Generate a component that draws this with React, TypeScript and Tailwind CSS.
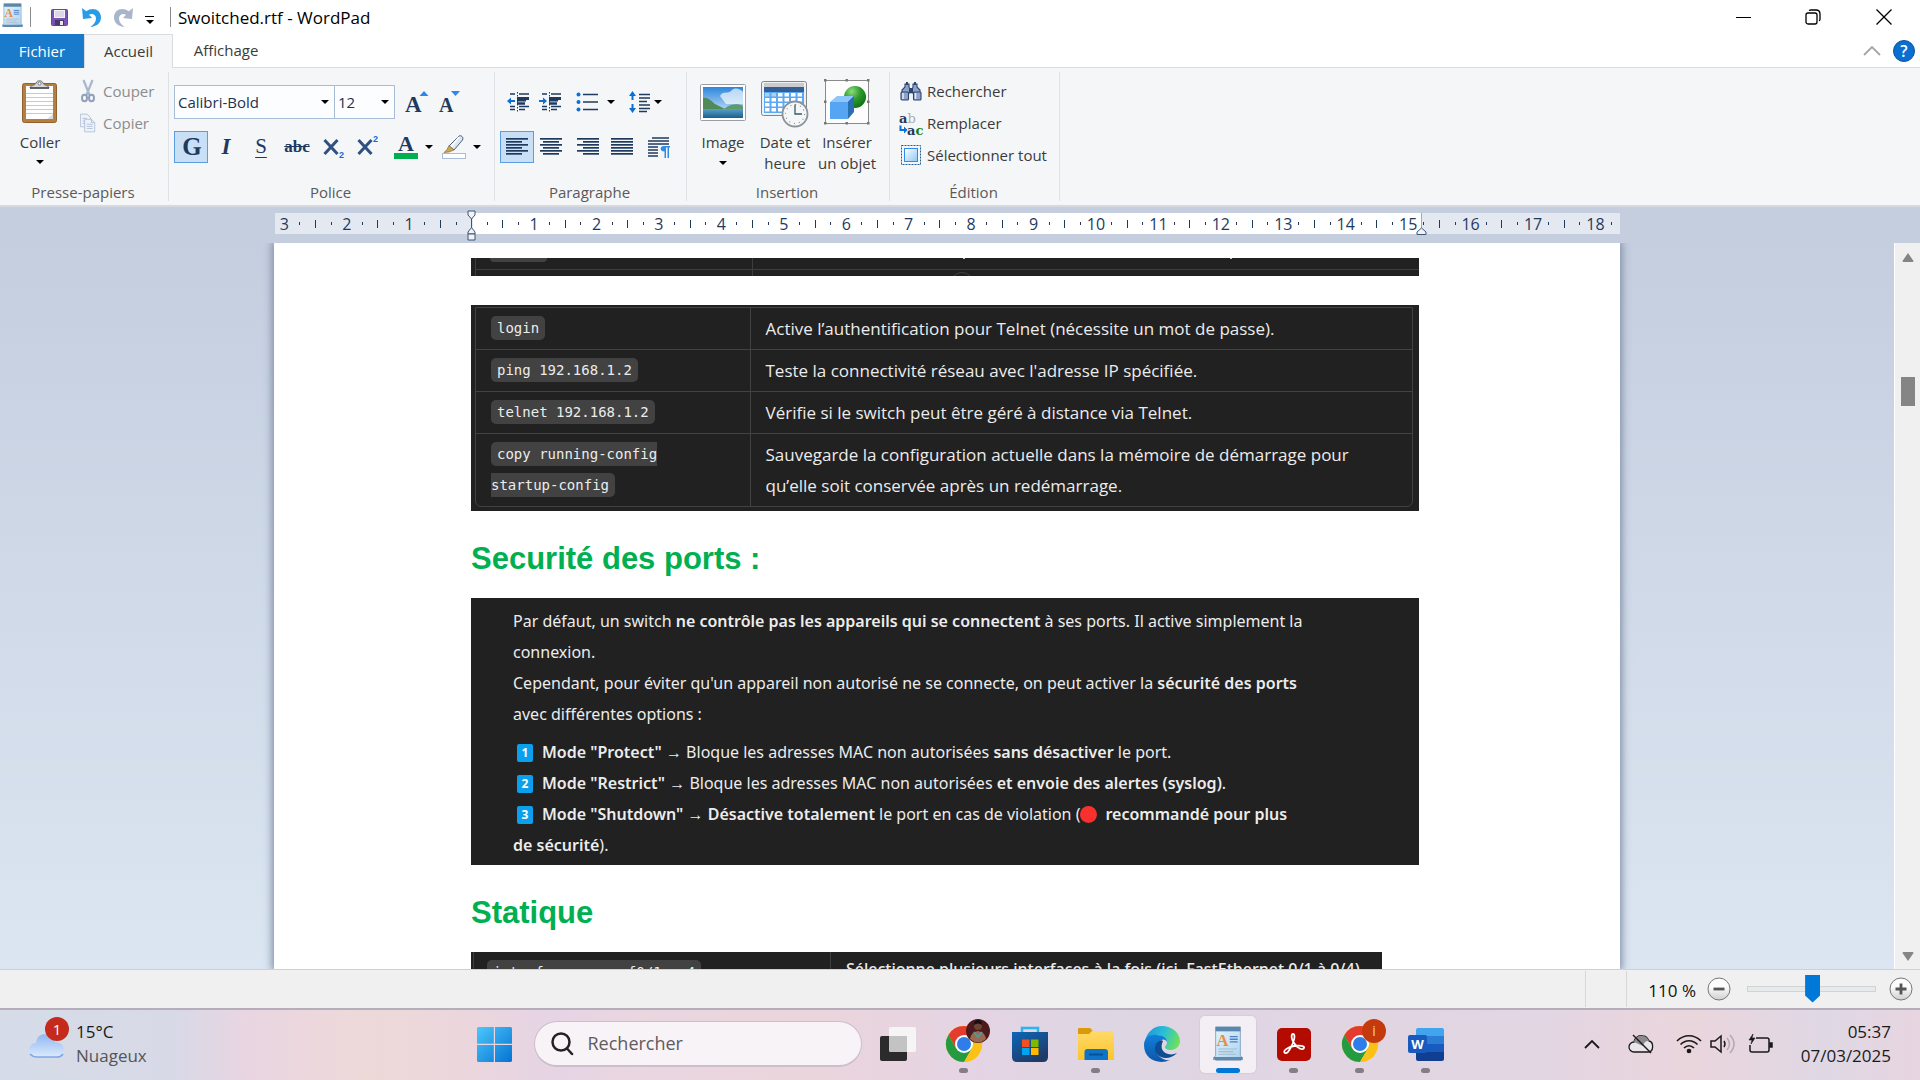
import type { ReactNode } from 'react';

const INK = '#1f3a5f';
const BLUE = '#0a6fd6';

function Caret() {
  return (
    <svg width="8" height="4" viewBox="0 0 8 4" className="shrink-0" aria-hidden="true">
      <path d="M0 0h8L4 4z" fill="#000" />
    </svg>
  );
}

function WordPadIcon({ size }: { size: number }) {
  return (
    <svg width={size} height={size * 1.18} viewBox="0 0 34 40" aria-hidden="true">
      <defs>
        <linearGradient id={'wp' + size} x1="0" y1="0" x2="1" y2="1">
          <stop offset="0" stopColor="#e8f5fd" />
          <stop offset="1" stopColor="#a9d3ef" />
        </linearGradient>
      </defs>
      <path d="M3 1h28v32l3 5H0l3-5z" fill={'url(#wp' + size + ')'} stroke="#7d9fbf" />
      <rect x="3" y="1" width="28" height="5" fill="#5b87ad" />
      <path d="M0 35h34l-2 4H3z" fill="#5f88ad" />
      <text x="4" y="23" fontFamily="Liberation Serif, serif" fontWeight="700" fontSize="19" fill="#f08a3a">A</text>
      <path d="M19 12h9M19 15h9M19 18h9" stroke="#4f7fc4" strokeWidth="1.5" />
      <path d="M6 26h21M6 29h17M6 32h20" stroke="#a8b9c9" strokeWidth="1.2" />
    </svg>
  );
}

function SaveIcon() {
  return (
    <svg width="17" height="17" viewBox="0 0 17 17" aria-hidden="true">
      <rect x=".5" y=".5" width="16" height="16" rx="1" fill="#7a52b3" stroke="#6a44a0" />
      <rect x="3" y="1" width="11" height="8" fill="#f4f2f8" />
      <path d="M4 3h9M4 5h9M4 7h9" stroke="#b9b0cc" strokeWidth=".8" />
      <rect x="4" y="11" width="9" height="5.5" fill="#4b3a66" />
      <rect x="9" y="12" width="3" height="4" fill="#e9e6f0" />
    </svg>
  );
}

function UndoIcon({ flip }: { flip?: boolean }) {
  return (
    <svg width="20" height="21" viewBox="0 0 20 21" className={flip ? '-scale-x-100' : ''} aria-hidden="true">
      <path
        d="M0 1l1 11 9-1-3-3.200c3-1.800 7-.3 7 3.700 0 3-2 6-5.500 8.500C14.500 19.500 19 16 19 10.500 19 3 11-.5 4.300 4.300z"
        fill={flip ? '#a9b5cb' : '#2b9be6'}
      />
    </svg>
  );
}

function ClipboardIcon() {
  return (
    <svg width="36" height="44" viewBox="0 0 36 44" aria-hidden="true">
      <rect x=".5" y="3.500" width="34" height="39" rx="2" fill="#b5803f" stroke="#8f6230" />
      <path d="M4 6h27v33H4z" fill="#fff" />
      <path d="M25 39l6-5v5z" fill="#d8dde2" />
      <path d="M4 13.500h27M4 17.500h27M4 21.500h27M4 25.500h27M4 29.500h27M4 33.500h27" stroke="#b9cddc" />
      <path d="M8 8c0-3 5-2 6-5 1-3 6-3 7 0 1 3 6 2 6 5z" fill="#d5d8db" stroke="#6b6f74" />
      <path d="M8 8h19" stroke="#44484c" strokeWidth="1.500" />
      <circle cx="17.500" cy="3.500" r="1.500" fill="#fff" stroke="#777" />
    </svg>
  );
}

function ScissorsIcon() {
  return (
    <svg width="14" height="24" viewBox="0 0 14 24" fill="none" aria-hidden="true">
      <path d="M2.500 1l6 15M11.500 1l-6 15" stroke="#a9b6cc" strokeWidth="2.200" />
      <ellipse cx="3.500" cy="19" rx="2.500" ry="3.300" stroke="#8fa0bd" strokeWidth="2" />
      <ellipse cx="10.500" cy="19" rx="2.500" ry="3.300" stroke="#8fa0bd" strokeWidth="2" />
    </svg>
  );
}

function CopyIcon() {
  return (
    <svg width="19" height="22" viewBox="0 0 19 22" fill="#eef2f9" stroke="#aebcd6" aria-hidden="true">
      <path d="M.5.5h8l4 4v11H.5z" />
      <path d="M3 5.500h5M3 8.500h5M3 11.500h5" />
      <path d="M5.500 6.500h8l4 4v11h-12z" />
      <path d="M13.500 6.500v4h4M8 12.500h7M8 15h7M8 17.500h7" fill="none" />
    </svg>
  );
}

function GrowIcon({ shrink }: { shrink?: boolean }) {
  return (
    <svg width="25" height="25" viewBox="0 0 25 25" overflow="visible" aria-hidden="true">
      <text x="0" y="22" fontFamily="Liberation Serif, serif" fontWeight="700" fontSize={shrink ? 20 : 23} fill={INK}>
        A
      </text>
      {shrink ? <path d="M12 1h9l-4.500 5z" fill="#2f86e8" /> : <path d="M14.500 6h9L19 1z" fill="#2f86e8" />}
    </svg>
  );
}

function FontColorIcon() {
  return (
    <svg width="24" height="26" viewBox="0 0 24 26" overflow="visible" aria-hidden="true">
      <text x="4" y="17" fontFamily="Liberation Serif, serif" fontWeight="700" fontSize="22" fill={INK}>A</text>
      <rect y="19" width="24" height="6" fill="#00b050" />
    </svg>
  );
}

function HighlightIcon() {
  return (
    <svg width="24" height="24" viewBox="0 0 24 24" aria-hidden="true">
      <path d="M7 11L17 1c2-1 5 1 3.500 4L12 15z" fill="#dfe6f0" stroke="#4a5f7f" />
      <path d="M17 2L9 12" stroke="#fff" strokeWidth="1.500" />
      <path d="M7 10.500l5 4.500-5 2-5 .5 3-3z" fill="#c9a55a" stroke="#7a6030" strokeWidth=".6" />
      <rect x=".5" y="18.500" width="23" height="5" fill="#fff" stroke="#a9bcd6" />
    </svg>
  );
}

function Lines({ rows }: { rows: [number, number][] }) {
  return (
    <svg width="22" height="19" viewBox="0 0 22 19" aria-hidden="true">
      {rows.map(([a, b], i) => (
        <rect key={i} x={a} y={i * 3} width={b - a} height="1.700" fill={INK} />
      ))}
    </svg>
  );
}

function IndentIcon({ more }: { more?: boolean }) {
  return (
    <svg width="23" height="20" viewBox="0 0 23 20" aria-hidden="true">
      <path d="M3 2h5M12 2h10M3 14.500h5M12 14.500h10M3 17.500h5M12 17.500h6" stroke={INK} strokeWidth="1.400" />
      <path d="M10 6.500h12M10 8h9" stroke={INK} strokeWidth="3" />
      <path d="M10 11.500h8" stroke={INK} strokeWidth="2.500" />
      <path d="M10.500 0v20" stroke={INK} strokeDasharray="1.500 1.500" />
      {more ? (
        <path d="M8 9L4 5.500V8H0v2h4v2.500z" fill={BLUE} />
      ) : (
        <path d="M0 9l4-3.500V8h4v2H4v2.500z" fill={BLUE} />
      )}
    </svg>
  );
}

function BulletsIcon() {
  return (
    <svg width="23" height="20" viewBox="0 0 23 20" aria-hidden="true">
      <g fill={BLUE}>
        <circle cx="2.500" cy="2.500" r="2" />
        <circle cx="2.500" cy="10" r="2" />
        <circle cx="2.500" cy="17.500" r="2" />
      </g>
      <path d="M7 2.500h15M7 10h15M7 17.500h15" stroke={INK} strokeWidth="1.300" />
    </svg>
  );
}

function SpacingIcon() {
  return (
    <svg width="21" height="22" viewBox="0 0 21 22" aria-hidden="true">
      <path d="M10 3.500h11M10 7h11M10 10.500h8M10 14h11M10 17.500h11M10 20.500h8" stroke={INK} strokeWidth="1.400" />
      <path d="M3.500 0L7 5H4.500v4h-2V5H0zM3.500 22L7 17H4.500v-4h-2v4H0z" fill={BLUE} />
    </svg>
  );
}

function ParagraphIcon() {
  return (
    <svg width="22" height="21" viewBox="0 0 22 21" aria-hidden="true">
      <path d="M4 1h17M0 4h21M0 7h21M0 10h10M0 13h10M0 16h10M0 19h10" stroke={INK} strokeWidth="1.400" />
      <path d="M16 9h6v1.500h-1V21h-1.500V10.500H18V21h-1.500v-6.500c-5 0-5-5.500-.5-5.500z" fill="#2f8be8" />
    </svg>
  );
}

function PictureIcon() {
  return (
    <svg width="46" height="37" viewBox="0 0 46 37" aria-hidden="true">
      <defs>
        <linearGradient id="sky" x1="0" y1="0" x2="0" y2="1">
          <stop offset="0" stopColor="#2c86dc" />
          <stop offset="1" stopColor="#e3f3fd" />
        </linearGradient>
        <linearGradient id="sea" x1="0" y1="0" x2="0" y2="1">
          <stop offset="0" stopColor="#5a9fc4" />
          <stop offset="1" stopColor="#1a5f90" />
        </linearGradient>
      </defs>
      <rect x=".5" y=".5" width="45" height="36" rx="1" fill="#fff" stroke="#9a9fa5" />
      <rect x="3" y="3" width="40" height="31" fill="url(#sky)" />
      <path d="M20 12c3-6 8-1 12-6 4-3 8-1 11 2v12H26z" fill="#fff" opacity=".65" />
      <path d="M3 14c5-1 8 3 12 6l10 5H3z" fill="#4f8a58" />
      <path d="M24 25c5-5 14-6 19-3v3z" fill="#5e9a6c" />
      <rect x="3" y="25" width="40" height="9" fill="url(#sea)" />
    </svg>
  );
}

function CalendarIcon() {
  const cols = [0, 1, 2, 3, 4, 5];
  const rows = [0, 1, 2, 3];
  return (
    <svg width="48" height="47" viewBox="0 0 48 47" aria-hidden="true">
      <rect x=".5" y=".5" width="45" height="34" rx="2" fill="#eef0f2" stroke="#80858b" />
      <rect x="3" y="2" width="40" height="4" fill="#c9cbce" />
      <rect x="3" y="6" width="40" height="5" fill="#345f96" />
      <rect x="3" y="11" width="40" height="21" fill="#5aa9f2" />
      {rows.map((r) =>
        cols.map((c) => <rect key={r + '-' + c} x={4 + c * 6.5} y={12 + r * 5} width="4.500" height="3.500" fill={r === 0 && c < 2 ? '#a9d2f8' : '#fff'} />),
      )}
      <circle cx="34" cy="33" r="12.500" fill="#f4f6f7" stroke="#8d9297" strokeWidth="1.800" />
      <circle cx="34" cy="33" r="9.500" fill="none" stroke="#8a8f94" strokeWidth="1.200" strokeDasharray="1 3.970" />
      <path d="M34 23.500V33h7" fill="none" stroke="#3a5a66" strokeWidth="1.300" />
    </svg>
  );
}

function ObjectIcon() {
  return (
    <svg width="46" height="46" viewBox="0 0 46 46" aria-hidden="true">
      <defs>
        <radialGradient id="ball" cx=".35" cy=".25" r=".8">
          <stop offset="0" stopColor="#8ddb7a" />
          <stop offset=".5" stopColor="#2d9a2d" />
          <stop offset="1" stopColor="#0e6e14" />
        </radialGradient>
      </defs>
      <rect x="1.500" y="1.500" width="43" height="43" fill="#fdfdfd" stroke="#8a8a8a" />
      <g fill="#777">
        {[0, 21.5, 43].map((x) => [0, 21.5, 43].map((y) => (x === 21.5 && y === 21.5 ? null : <rect key={x + '-' + y} x={x} y={y} width="2.500" height="2.500" />)))}
      </g>
      <circle cx="31" cy="18" r="11" fill="url(#ball)" />
      <path d="M6 23l7-6h17l-6 6z" fill="#8cc6fb" />
      <path d="M24 23l6-6v16l-6 7z" fill="#2b6fb3" />
      <path d="M6 23h18v17H6z" fill="#55a5f2" />
    </svg>
  );
}

function BinocularsIcon() {
  return (
    <svg width="22" height="20" viewBox="0 0 22 20" aria-hidden="true">
      <g fill="#8fa3c8" stroke="#2b4470" strokeWidth="1.100">
        <path d="M5 3h4v3l1 3v3H2V9l3-3zM13 3h4v3l3 3v3h-8V9l1-3z" />
        <rect x="1" y="11" width="7.500" height="8" rx="1" />
        <rect x="13.500" y="11" width="7.500" height="8" rx="1" />
      </g>
      <path d="M6 1h2v3H6zM14 1h2v3h-2zM9 7h4v5H9z" fill="#2b4470" />
      <path d="M3 12v6M15.500 12v6" stroke="#e4eaf5" strokeWidth="1.500" />
    </svg>
  );
}

function ReplaceIcon() {
  return (
    <svg width="25" height="25" viewBox="0 0 25 25" overflow="visible" fontFamily="DejaVu Serif, serif" fontWeight="700" aria-hidden="true">
      <text x="0" y="12" fontSize="13" fill={INK}>a<tspan fontWeight="400" fill="#a9adb3">b</tspan></text>
      <text x="8" y="24" fontSize="13" fill={INK}>a<tspan fill="#14801c">c</tspan></text>
      <path d="M.5 14.500h2v3.500H5v-2.500l3.500 3.500L5 22.500V20H.5z" fill={BLUE} />
    </svg>
  );
}

function SelectAllIcon() {
  return (
    <svg width="20" height="20" viewBox="0 0 20 20" aria-hidden="true">
      <defs>
        <linearGradient id="sel" x1="0" y1="0" x2="1" y2="1">
          <stop offset="0" stopColor="#fff" />
          <stop offset="1" stopColor="#8fc6f5" />
        </linearGradient>
      </defs>
      <rect x=".5" y=".5" width="19" height="19" fill="none" stroke="#1d5f9e" strokeDasharray="2 1" />
      <rect x="3.500" y="3.500" width="13" height="13" fill="url(#sel)" stroke="#2f8be8" />
    </svg>
  );
}

function Group({ label, className, children }: { label: string; className: string; children: ReactNode }) {
  return (
    <section aria-label={label} className={'my-1 flex flex-col border-r border-[#dfe2e5] ' + className}>
      <div className="min-h-0 flex-1">{children}</div>
      <div className="pr-[2px] pb-px text-center leading-4 text-[#5a5a5a]">{label}</div>
    </section>
  );
}

function Tool({ label, className, active, children }: { label: string; className: string; active?: boolean; children: ReactNode }) {
  return (
    <button
      type="button"
      aria-label={label}
      className={'flex h-8 shrink-0 items-center justify-center ' + (active ? 'border border-[#5c9ce0] bg-[#c9dff6] ' : '') + className}
    >
      {children}
    </button>
  );
}

function SideButton({ icon, label, muted }: { icon: ReactNode; label: string; muted?: boolean }) {
  return (
    <button type="button" className={'flex h-8 items-center whitespace-nowrap ' + (muted ? 'text-[#8c8c8c]' : 'text-[#3b3b3b]')}>
      <span className={muted ? 'flex w-4 items-center justify-center' : 'flex w-[26px] items-center justify-center'}>{icon}</span>
      <span className={muted ? 'pl-[7px]' : 'pl-[3px]'}>{label}</span>
    </button>
  );
}

function Ribbon() {
  return (
    <div className="flex h-[139px] shrink-0 border-b-2 border-[#d6dae0] bg-[#f5f6f7] text-[15px] text-[#3b3b3b]">
      <Group label="Presse-papiers" className="w-[169px]">
        <div className="flex">
          <button type="button" className="flex w-20 flex-col items-center pt-2">
            <ClipboardIcon />
            <span className="pt-2 leading-5">Coller</span>
            <span className="pt-2"><Caret /></span>
          </button>
          <div className="flex flex-col pt-[3px]">
            <SideButton muted icon={<ScissorsIcon />} label="Couper" />
            <SideButton muted icon={<CopyIcon />} label="Copier" />
          </div>
        </div>
      </Group>

      <Group label="Police" className="w-[326px]">
        <div className="flex items-center pt-[13px] pl-[5px]">
          <label className="relative flex items-center">
            <select aria-label="Police" className="h-[34px] w-[161px] appearance-none border border-[#a9bcd6] bg-[#fcfdfe] pl-[3px] text-[15px] text-[#1e3350]">
              <option>Calibri-Bold</option>
            </select>
            <span className="pointer-events-none absolute right-[6px]"><Caret /></span>
          </label>
          <label className="relative -ml-px flex items-center">
            <select aria-label="Taille de police" className="h-[34px] w-[61px] appearance-none border border-[#a9bcd6] bg-[#fcfdfe] pl-[3px] text-[15px] text-[#1e3350]">
              <option>12</option>
            </select>
            <span className="pointer-events-none absolute right-[6px]"><Caret /></span>
          </label>
          <Tool label="Agrandir la police" className="ml-[6px] w-8"><GrowIcon /></Tool>
          <Tool label="Réduire la police" className="ml-[2px] w-8"><GrowIcon shrink /></Tool>
        </div>
        <div className="flex items-center pt-3 pl-[5px] font-['Liberation_Serif',serif] text-[#1f3a5f]">
          <Tool active label="Gras" className="w-[34px] pl-[2px] text-[25px] font-bold">G</Tool>
          <Tool label="Italique" className="w-9 text-[23px] font-bold italic">I</Tool>
          <Tool label="Souligné" className="w-[34px] text-[21px] underline decoration-1 underline-offset-4">S</Tool>
          <Tool label="Barré" className="w-[38px] text-[17px] font-bold line-through">abc</Tool>
          <Tool label="Indice" className="w-9">
            <svg width="22" height="24" viewBox="0 0 22 24" overflow="visible">
              <path d="M1.500 5l13 14M14.500 5l-13 14" stroke="#2f5080" strokeWidth="3" />
              <text x="16" y="23" fontFamily="Liberation Sans, sans-serif" fontWeight="700" fontSize="9" fill={BLUE}>2</text>
            </svg>
          </Tool>
          <Tool label="Exposant" className="w-8">
            <svg width="22" height="24" viewBox="0 0 22 24" overflow="visible">
              <path d="M1.500 5l13 14M14.500 5l-13 14" stroke="#2f5080" strokeWidth="3" />
              <text x="16" y="7" fontFamily="Liberation Sans, sans-serif" fontWeight="700" fontSize="9" fill={BLUE}>2</text>
            </svg>
          </Tool>
          <Tool label="Couleur du texte" className="ml-2 w-[42px] gap-[7px]"><FontColorIcon /><Caret /></Tool>
          <Tool label="Surbrillance" className="ml-[6px] w-[42px] gap-[7px]"><HighlightIcon /><Caret /></Tool>
        </div>
      </Group>

      <Group label="Paragraphe" className="w-[192px]">
        <div className="flex items-center pt-[14px] pl-[6px]">
          <Tool label="Diminuer le retrait" className="w-[34px]"><IndentIcon /></Tool>
          <Tool label="Augmenter le retrait" className="w-[30px]"><IndentIcon more /></Tool>
          <Tool label="Puces" className="ml-[7px] w-[46px] gap-2"><BulletsIcon /><Caret /></Tool>
          <Tool label="Interligne" className="ml-2 w-[38px] gap-1"><SpacingIcon /><Caret /></Tool>
        </div>
        <div className="flex items-center pt-[13px] pl-[5px]">
          <Tool active label="Aligner à gauche" className="w-[34px]"><Lines rows={[[0, 22], [0, 16], [0, 22], [0, 16], [0, 22], [0, 16]]} /></Tool>
          <Tool label="Centrer" className="w-[34px]"><Lines rows={[[0, 22], [3, 19], [0, 22], [3, 19], [0, 22], [3, 19]]} /></Tool>
          <Tool label="Aligner à droite" className="ml-[3px] w-[34px]"><Lines rows={[[0, 22], [6, 22], [0, 22], [6, 22], [0, 22], [6, 22]]} /></Tool>
          <Tool label="Justifier" className="w-[33px]"><Lines rows={[[0, 22], [0, 22], [0, 22], [0, 22], [0, 22], [0, 22]]} /></Tool>
          <Tool label="Paragraphe" className="ml-1 w-[34px]"><ParagraphIcon /></Tool>
        </div>
      </Group>

      <Group label="Insertion" className="w-[203px]">
        <div className="flex pl-1 leading-[21px]">
          <button type="button" className="flex w-16 flex-col items-center pt-[12px]">
            <PictureIcon />
            <span className="pt-[11px]">Image</span>
            <span className="pt-2"><Caret /></span>
          </button>
          <button type="button" className="flex w-[60px] flex-col items-center pt-[9px] whitespace-nowrap">
            <CalendarIcon />
            <span className="pt-1">Date et<br />heure</span>
          </button>
          <button type="button" className="flex w-[64px] flex-col items-center pt-[7px] whitespace-nowrap">
            <ObjectIcon />
            <span className="pt-[7px]">Insérer<br />un objet</span>
          </button>
        </div>
      </Group>

      <Group label="Édition" className="w-[170px]">
        <div className="flex flex-col items-start pt-[3px] pl-2">
          <SideButton icon={<BinocularsIcon />} label="Rechercher" />
          <SideButton icon={<ReplaceIcon />} label="Remplacer" />
          <SideButton icon={<SelectAllIcon />} label="Sélectionner tout" />
        </div>
      </Group>
    </div>
  );
}

const QUARTERS = Array.from({ length: 86 }, (_, i) => i - 12);

function Ruler() {
  return (
    <div className="h-9 shrink-0 bg-[#c5cedf] pt-[6px] pr-[26px]">
      <div className="relative mx-auto flex h-[21px] w-[1345px] items-center bg-[linear-gradient(to_right,#e4e8f0_14.700%,#fff_14.700%,#fff_85.200%,#e4e8f0_85.200%)] pr-px pl-[2px] text-[16px] text-[#1f3a5f]">
        {QUARTERS.map((q) => (
          <span key={q} className="flex min-w-0 flex-1 items-center justify-center">
            {q === 0 ? null : q % 4 === 0 ? (
              <span>{Math.abs(q / 4)}</span>
            ) : (
              <span className={q % 2 === 0 ? 'h-2 w-px shrink-0 bg-[#1f3a5f]' : 'h-[3px] w-px shrink-0 bg-[#1f3a5f]'} />
            )}
          </span>
        ))}
        <svg width="13" height="31" viewBox="0 0 13 31" className="absolute top-[-3px] left-[190px]" fill="#f1f3f6" stroke="#3a5575" aria-hidden="true">
          <path d="M6.500 8v10" />
          <path d="M3 1h7v4L6.500 9 3 5z" />
          <path d="M6.500 17.500L10 22v2H3v-2z" />
          <path d="M3 24h7v6H3z" />
        </svg>
        <svg width="11" height="22" viewBox="0 0 11 22" className="absolute top-0 left-[1141px]" fill="#f1f3f6" stroke="#3a5575" aria-hidden="true">
          <path d="M5.500 0v15" stroke="#a0abba" />
          <path d="M5.500 15L10 19v2.500H1V19z" />
        </svg>
      </div>
    </div>
  );
}

const CODE = "box-decoration-slice rounded-[5px] bg-[#424242] px-[6px] py-[4px] font-['DejaVu_Sans_Mono',monospace] text-[14px]";

const COMMANDS = [
  { cmd: ['login'], lines: ['Active l’authentification pour Telnet (nécessite un mot de passe).'] },
  { cmd: ['ping 192.168.1.2'], lines: ["Teste la connectivité réseau avec l'adresse IP spécifiée."] },
  { cmd: ['telnet 192.168.1.2'], lines: ['Vérifie si le switch peut être géré à distance via Telnet.'] },
  {
    cmd: ['copy running-config', 'startup-config'],
    lines: ['Sauvegarde la configuration actuelle dans la mémoire de démarrage pour', 'qu’elle soit conservée après un redémarrage.'],
  },
];

function Keycap({ n }: { n: number }) {
  return (
    <span className="mr-[9px] ml-1 inline-flex h-[18px] w-4 items-center justify-center rounded-[2px] bg-[#0aa0ee] align-[1px] text-[12px] leading-none font-bold text-white">
      {n}
    </span>
  );
}

function Page() {
  return (
    <main className="mx-auto h-full w-[1346px] overflow-hidden bg-white pt-[15px] pl-[197px] shadow-[0_0_8px_2px_#7f8da6]">
      <div className="relative flex h-[18px] w-[948px] overflow-hidden bg-[#212121]">
        <div className="ml-[4px] w-[278px] border-x border-[#3d3d3d]">
          <div className="ml-[14px] h-1 w-[57px] rounded-b-[5px] bg-[#424242]" />
          <div className="mt-[7px] border-t border-[#3d3d3d]" />
        </div>
        <div className="flex-1">
          <div className="flex h-[11px] gap-[265px] pl-[210px]">
            <span className="h-px w-[2px] bg-[#c8c8c8]" />
            <span className="h-px w-[2px] bg-[#c8c8c8]" />
          </div>
          <div className="border-t border-[#3d3d3d]" />
        </div>
        <span className="absolute top-[14px] left-[479px] size-6 rounded-full border border-[#444]" />
      </div>

      <div className="mt-[29px] h-[206px] w-[948px] bg-[#212121] pt-[2px] pl-[4px] font-['Open_Sans',sans-serif] text-[#ececec]">
        <div className="w-[938px] rounded-b-[6px] border border-[#424242]">
          <table className="w-full border-collapse text-left">
            <tbody>
              {COMMANDS.map((row, i) => (
                <tr key={row.cmd[0]} className={i ? 'border-t border-[#424242]' : ''}>
                  <th scope="row" className="w-[274px] border-r border-[#424242] py-[5px] pl-[15px] align-top font-['DejaVu_Sans_Mono',monospace] text-[14px] leading-[31px] font-normal">
                    <code className={CODE}>
                      {row.cmd.map((c, k) => (
                        <span key={c}>{k ? <br /> : null}{c}</span>
                      ))}
                    </code>
                  </th>
                  <td className="py-[5px] pl-[15px] align-top text-[17px] leading-[31px]">
                    {row.lines.map((l) => (
                      <div key={l} className="whitespace-nowrap">{l}</div>
                    ))}
                  </td>
                </tr>
              ))}
            </tbody>
          </table>
        </div>
      </div>

      <h1 className="mt-[30px] font-['Liberation_Sans',sans-serif] text-[31px] leading-[36px] font-bold text-[#00b050]">Securité des ports :</h1>

      <div className="mt-[21px] h-[267px] w-[948px] bg-[#212121] pt-[8px] pl-[42px] font-['Noto_Sans',sans-serif] text-[16px] leading-[31px] whitespace-nowrap text-[#ececec]">
        <p>
          Par défaut, un switch <b className="font-semibold">ne contrôle pas les appareils qui se connectent</b> à ses ports. Il active simplement la<br />
          connexion.<br />
          Cependant, pour éviter qu'un appareil non autorisé ne se connecte, on peut activer la <b className="font-semibold">sécurité des ports</b><br />
          avec différentes options :
        </p>
        <p className="mt-[7px]">
          <Keycap n={1} /><b className="font-semibold">Mode "Protect"</b> → Bloque les adresses MAC non autorisées <b className="font-semibold">sans désactiver</b> le port.<br />
          <Keycap n={2} /><b className="font-semibold">Mode "Restrict"</b> → Bloque les adresses MAC non autorisées <b className="font-semibold">et envoie des alertes (syslog)</b>.<br />
          <Keycap n={3} /><b className="font-semibold">Mode "Shutdown"</b> → <b className="font-semibold">Désactive totalement</b> le port en cas de violation (
          <span className="mr-2 inline-block size-[17px] rounded-full bg-[#f8312f] align-[-3px]" /><b className="font-semibold">recommandé pour plus</b><br />
          <b className="font-semibold">de sécurité</b>).
        </p>
      </div>

      <h1 className="mt-[30px] font-['Liberation_Sans',sans-serif] text-[31px] leading-[36px] font-bold text-[#00b050]">Statique</h1>

      <div className="mt-[21px] flex h-20 w-[911px] bg-[#212121] font-['Noto_Sans',sans-serif] text-[16px] leading-[31px] whitespace-nowrap text-[#ececec]">
        <div className="ml-[2px] w-[358px] border-x border-[#3d3d3d] pt-[4px] pl-[13px]">
          <code className={CODE}>interface range f0/1 - 4</code>
        </div>
        <div className="pt-[2px] pl-[15px] font-medium">Sélectionne plusieurs interfaces à la fois (ici, FastEthernet 0/1 à 0/4).</div>
      </div>
    </main>
  );
}

function ScrollBar() {
  return (
    <div className="flex w-[26px] shrink-0 flex-col items-center border-l border-white bg-[#f0f0f0] pt-[10px] pb-2">
      <svg width="12" height="9" viewBox="0 0 12 9"><path d="M6 0l5.500 8q0 1-1 1h-9q-1 0-1-1z" fill="#858585" /></svg>
      <div className="mt-[115px] h-[29px] w-[14px] bg-[#858585]" />
      <div className="flex-1" />
      <svg width="12" height="9" viewBox="0 0 12 9"><path d="M6 9L.5 1q0-1 1-1h9q1 0 1 1z" fill="#858585" /></svg>
    </div>
  );
}

function ZoomButton({ plus }: { plus?: boolean }) {
  return (
    <button type="button" aria-label={plus ? 'Zoom avant' : 'Zoom arrière'} className="shrink-0">
      <svg width="24" height="24" viewBox="0 0 24 24">
        <defs>
          <linearGradient id={plus ? 'zin' : 'zout'} x1="0" y1="0" x2="0" y2="1"><stop offset=".4" stopColor="#fcfcfc" /><stop offset="1" stopColor="#cfcfcf" /></linearGradient>
        </defs>
        <circle cx="12" cy="12" r="11" fill={plus ? 'url(#zin)' : 'url(#zout)'} stroke="#777" />
        <path d={plus ? 'M6.500 12h11M12 6.500v11' : 'M6.500 12h11'} stroke="#555" strokeWidth="2.800" />
      </svg>
    </button>
  );
}

function StatusBar() {
  return (
    <div className="flex h-[39px] shrink-0 items-center justify-end border-t border-[#d0d0d0] bg-[#f0f0f0] pr-[7px] pb-px text-[17px] text-[#111]">
      <span className="h-9 w-[42px] border-x border-[#d7d7d7]" />
      <span className="w-[80px] pt-1 pr-[11px] text-right">110 %</span>
      <ZoomButton />
      <input
        type="range"
        aria-label="Zoom"
        defaultValue={51}
        className="mr-[13px] ml-4 h-[30px] w-[129px] appearance-none bg-transparent [&::-webkit-slider-runnable-track]:h-[6px] [&::-webkit-slider-runnable-track]:border [&::-webkit-slider-runnable-track]:border-[#d0d4d4] [&::-webkit-slider-runnable-track]:bg-[#e6eaea] [&::-webkit-slider-thumb]:mt-[-12px] [&::-webkit-slider-thumb]:h-7 [&::-webkit-slider-thumb]:w-[15px] [&::-webkit-slider-thumb]:appearance-none [&::-webkit-slider-thumb]:bg-[#0078d7] [&::-webkit-slider-thumb]:[clip-path:polygon(0_0,100%_0,100%_75%,50%_100%,0_75%)]"
      />
      <ZoomButton plus />
    </div>
  );
}

function Slot({ label, active, running, children }: { label: string; active?: boolean; running?: boolean; children: ReactNode }) {
  return (
    <button type="button" aria-label={label} className="flex h-full w-[66px] shrink-0 flex-col items-center pt-[6px]">
      <span className={'flex h-[57px] w-14 flex-col items-center rounded-[5px] ' + (active ? 'bg-white/60 shadow-[0_0_1px_1px_#d8cdd8]' : '')}>
        <span className="flex h-[52px] items-center pt-1">{children}</span>
        {active ? <span className="h-[5px] w-6 shrink-0 rounded-full bg-[#0078d4]" /> : running ? <span className="h-[5px] w-[9px] shrink-0 rounded-full bg-[#857c86]" /> : null}
      </span>
    </button>
  );
}

function ChromeIcon({ info }: { info?: boolean }) {
  return (
    <svg width="36" height="36" viewBox="0 0 36 36" overflow="visible" aria-hidden="true">
      <circle cx="18" cy="18" r="18" fill="#fbc116" />
      <path d="M2.400 9A18 18 0 0 1 33.600 9H18L10.200 22.500z" fill="#e33b2e" />
      <path d="M2.400 9A18 18 0 0 0 18 36l7.800-13.500H10.200z" fill="#249a41" />
      <path d="M18 9h15.600A18 18 0 0 1 18 36l7.800-13.500z" fill="#fbc116" />
      <circle cx="18" cy="18" r="9" fill="#fff" />
      <circle cx="18" cy="18" r="7" fill="#2f7de9" />
      {info ? (
        <g>
          <circle cx="32" cy="5" r="12" fill="#c53a0c" />
          <text x="32" y="10" textAnchor="middle" fontFamily="Open Sans, sans-serif" fontSize="14" fill="#f3c6b5">i</text>
        </g>
      ) : (
        <g>
          <circle cx="32" cy="5" r="12" fill="#4c191c" />
          <circle cx="32" cy="0" r="4" fill="#6d4433" />
          <path d="M28-1q0-5 4-5t4 5q-4-3-8 0z" fill="#17100f" />
          <path d="M24 13q1-7 8-8 7 1 8 8-8 7-16 0z" fill="#9a6a4e" />
          <path d="M28 6l4 5 4-5" fill="none" stroke="#4f9aa0" strokeWidth="2" />
        </g>
      )}
    </svg>
  );
}

function StoreIcon() {
  return (
    <svg width="36" height="36" viewBox="0 0 36 36" aria-hidden="true">
      <defs><linearGradient id="store" x1="0" y1="0" x2=".6" y2="1"><stop stopColor="#0d67b8" /><stop offset="1" stopColor="#203a66" /></linearGradient></defs>
      <path d="M10 8V2h16v6" fill="none" stroke="#29b5f0" strokeWidth="2.500" />
      <path d="M0 6h36v25q0 5-5 5H5q-5 0-5-5z" fill="url(#store)" />
      <path d="M10 13.500h7.500V21H10z" fill="#f25022" /><path d="M19 13.500h7.500V21H19z" fill="#7fba00" />
      <path d="M10 22h7.500v7H10z" fill="#00a4ef" /><path d="M19 22h7.500v7H19z" fill="#ffb900" />
    </svg>
  );
}

function FolderIcon() {
  return (
    <svg width="36" height="34" viewBox="0 0 36 34" aria-hidden="true">
      <defs><linearGradient id="fold" x1="0" y1="0" x2="0" y2="1"><stop stopColor="#ffd968" /><stop offset="1" stopColor="#fcc52b" /></linearGradient></defs>
      <path d="M0 2q0-1 1-1h11l3 3v4H0z" fill="#dd9a08" />
      <path d="M0 7h11l3-3h21q1 0 1 1v28H0z" fill="url(#fold)" />
      <path d="M6.500 33v-8q0-3 3-3h17q3.500 0 3.500 3v8z" fill="#0f73c9" />
      <path d="M11 27.500h14" stroke="#0a4f90" strokeWidth="2" />
    </svg>
  );
}

function EdgeIcon() {
  return (
    <svg width="36" height="36" viewBox="0 0 36 36" aria-hidden="true">
      <defs>
        <linearGradient id="edgeTop" x1="0" y1=".3" x2="1" y2=".6"><stop stopColor="#1c97df" /><stop offset=".5" stopColor="#2cc0d3" /><stop offset="1" stopColor="#6fe356" /></linearGradient>
        <linearGradient id="edgeLow" x1="0" y1="0" x2="0" y2="1"><stop stopColor="#1080dc" /><stop offset="1" stopColor="#0f56a8" /></linearGradient>
      </defs>
      <path d="M1 15C3 6 10 0 18 0c10 0 18 7 18 15 0 6-5 9-9 9-5 0-6-2-6-3s2-2 2-5c0-4-5-7-10-7C8 9 3 11 1 15z" fill="url(#edgeTop)" />
      <path d="M0 19C0 11 7 8 13 9c6 0 10 3 10 7-1-2-3-3-5-2-4 1-7 5-6 10 1 6 7 11 14 10-11 5-26 0-26-15z" fill="url(#edgeLow)" />
      <path d="M15 15c-5 3-5 9-2 13 5 6 14 5 20-1-6 3-13 1-15-4-1-3 0-6 1-8-1-1-3-1-4 0z" fill="#0d4d92" />
    </svg>
  );
}

function AcrobatIcon() {
  return (
    <svg width="34" height="33" viewBox="0 0 34 33" aria-hidden="true">
      <rect width="34" height="33" rx="5" fill="#b30b00" />
      <path d="M8 25c-3-2 3-6 9-7s11 0 10 2c-1 3-7 0-10-5-3-4-3-9-1-9 3 0 1 8-2 13-2 4-4 7-6 6z" fill="none" stroke="#fff" strokeWidth="1.800" />
    </svg>
  );
}

function WordIcon() {
  return (
    <svg width="36" height="33" viewBox="0 0 36 33" aria-hidden="true">
      <path d="M10 0h24q2 0 2 2v6H8V2q0-2 2-2z" fill="#41a5ee" />
      <path d="M8 8h28v8H8z" fill="#2b7cd3" />
      <path d="M8 16h28v8H8z" fill="#185abd" />
      <path d="M8 24h28v7q0 2-2 2H10q-2 0-2-2z" fill="#103f91" />
      <rect y="7" width="19" height="18" rx="2" fill="#185abd" />
      <text x="9.500" y="21" textAnchor="middle" fontFamily="Open Sans, sans-serif" fontWeight="700" fontSize="13" fill="#fff">W</text>
    </svg>
  );
}

function TaskBar() {
  return (
    <footer className="relative flex h-[72px] shrink-0 justify-center border-t-2 border-[#b5adb9] bg-[linear-gradient(to_right,#d5dce8_0%,#d8d9e7_9%,#e9d5e1_13%,#eed9d9_19%,#ebd6dc_24%,#e6d4e5_29%,#e9d6e0_33%,#ebd5dc_42%,#e5d4e3_50%,#ded6e3_58%,#e2d5e2_72%,#e2d6e3_80%,#ead5dc_88%,#dfd8e4_95%,#e7d5e0_100%)] text-[#1a1a1a]">
      <button type="button" className="absolute top-0 left-7 flex h-full items-center pb-[2px] text-left text-[17px] leading-6">
        <span className="relative mr-[11px]">
          <svg width="37" height="27" viewBox="0 0 37 27" aria-hidden="true">
            <defs><linearGradient id="cloud" x1="0" y1="0" x2="0" y2="1"><stop stopColor="#8fb8f3" /><stop offset="1" stopColor="#dce9fb" /></linearGradient></defs>
            <path d="M8 26a7 7 0 0 1 0-14C9 4 15 2 20 4c4 1 6 4 7 7 6 0 9 4 9 8s-3 7-7 7z" fill="url(#cloud)" />
            <path d="M2 23q3 3 7 3h20q4 0 6-3" fill="none" stroke="#7da6e8" strokeWidth="1.500" />
          </svg>
          <span className="absolute top-[-14px] left-[17px] flex size-6 items-center justify-center rounded-full bg-[#c42b1c] text-[15px] text-white">1</span>
        </span>
        <span>15°C<br /><span className="text-[#555]">Nuageux</span></span>
      </button>

      <Slot label="Démarrer">
        <svg width="35" height="35" viewBox="0 0 35 35">
          <defs><linearGradient id="win" x1="0" y1="0" x2="1" y2="1"><stop stopColor="#4cc8fb" /><stop offset="1" stopColor="#0572d2" /></linearGradient></defs>
          <path d="M1 0h15.800v16.800H0V1zM18 0h16l1 1v15.800H18zM0 18h16.800v17H1l-1-1zM18 18h17v16l-1 1H18z" fill="url(#win)" />
        </svg>
      </Slot>
      <label className="mt-[11px] mr-[3px] ml-[6px] flex h-[46px] w-[328px] shrink-0 items-center rounded-full border border-b-2 border-[#cbbfca] bg-[#f8f3f7] pl-[15px]">
        <svg width="24" height="24" viewBox="0 0 24 24" fill="none" stroke="#222" strokeWidth="2.500" strokeLinecap="round"><circle cx="11" cy="10" r="8.500" /><path d="M17 16.500L22 22" /></svg>
        <input type="text" aria-label="Rechercher" placeholder="Rechercher" className="ml-[14px] w-56 bg-transparent text-[18px] outline-none placeholder:text-[#5f5b60]" />
      </label>
      <Slot label="Vue des tâches">
        <svg width="36" height="35" viewBox="0 0 36 35"><rect y="9" width="27" height="25" rx="2" fill="#2b2b2b" /><rect x="9" width="27" height="25" rx="2" fill="#f5f5f5" /><path d="M9 9h18v16H11q-2 0-2-2z" fill="#c3c3c3" /></svg>
      </Slot>
      <Slot running label="Chrome"><ChromeIcon /></Slot>
      <Slot label="Microsoft Store"><StoreIcon /></Slot>
      <Slot running label="Explorateur"><FolderIcon /></Slot>
      <Slot label="Edge"><EdgeIcon /></Slot>
      <Slot active label="WordPad"><WordPadIcon size={30} /></Slot>
      <Slot running label="Acrobat"><AcrobatIcon /></Slot>
      <Slot running label="Chrome, profil i"><ChromeIcon info /></Slot>
      <Slot running label="Word"><WordIcon /></Slot>

      <div className="absolute top-0 right-[29px] flex h-full items-center pb-[2px]">
        <svg width="16" height="10" viewBox="0 0 16 10" fill="none" stroke="#1a1a1a" strokeWidth="1.800" className="mr-7"><path d="M1 9l7-7 7 7" /></svg>
        <svg width="26" height="22" viewBox="0 0 26 22" className="mr-[22px]">
          <path d="M6 19a5 5 0 0 1 0-10c1-5 5-7 9-6 3 0 5 3 6 5 5 1 5 11-1 11z" fill="#e8e6e9" stroke="#1a1a1a" strokeWidth="1.300" />
          <path d="M6 9c1-5 5-7 9-6 3 0 5 3 6 5-4 0-5 2-6 5z" fill="#8d8a8e" />
          <path d="M5 2l18 18" stroke="#1a1a1a" strokeWidth="1.500" />
        </svg>
        <svg width="26" height="20" viewBox="0 0 26 20" fill="none" stroke="#1a1a1a" strokeWidth="1.700" className="mr-2">
          <path d="M1 7c7-7 17-7 24 0M4.500 10.500c5-5 12-5 17 0M8 14c3-3 7-3 10 0" /><circle cx="13" cy="17" r="1.500" fill="#1a1a1a" />
        </svg>
        <svg width="26" height="20" viewBox="0 0 26 20" fill="none" stroke="#1a1a1a" strokeWidth="1.500" className="mr-3">
          <path d="M1 7h4l6-5v16l-6-5H1z" /><path d="M14 7q2 3 0 6" /><path d="M17 4q5 6 0 12M20 1q8 9 0 18" stroke="#b3a8b3" />
        </svg>
        <svg width="25" height="20" viewBox="0 0 25 20" fill="none" stroke="#1a1a1a" strokeWidth="1.500" className="mr-7">
          <path d="M8 4h11q2 0 2 2v10q0 2-2 2H4q-2 0-2-2v-5" /><path d="M22 9v4h2V9z" fill="#1a1a1a" /><path d="M5 0L1 6h3L3 10l4-6H4z" fill="#1a1a1a" strokeWidth=".6" />
        </svg>
        <div className="text-right text-[17px] leading-6">05:37<br />07/03/2025</div>
      </div>
    </footer>
  );
}

export default function App() {
  return (
    <div className="flex h-screen flex-col overflow-hidden bg-white font-['Open_Sans','Noto_Sans',sans-serif]">
      <header className="shrink-0">
        <div className="flex h-[34px] items-center">
          <div className="flex flex-1 items-center">
            <span className="ml-[2px] pb-1"><WordPadIcon size={21} /></span>
            <span className="ml-[7px] h-5 w-px bg-[#8a8a8a]" />
            <button type="button" aria-label="Enregistrer" className="ml-5 pt-[2px]"><SaveIcon /></button>
            <button type="button" aria-label="Annuler" className="ml-[14px] pt-[2px]"><UndoIcon /></button>
            <button type="button" aria-label="Rétablir" className="ml-[11px] pt-[2px]"><UndoIcon flip /></button>
            <button type="button" aria-label="Personnaliser" className="ml-3 flex flex-col items-center gap-[3px] pt-[6px]">
              <span className="h-px w-[9px] bg-black" />
              <Caret />
            </button>
            <span className="ml-4 h-5 w-px bg-[#8a8a8a]" />
            <h2 className="ml-[7px] pt-px text-[17px] text-black">Swoitched.rtf - WordPad</h2>
          </div>
          <div className="flex items-center">
            <button type="button" aria-label="Réduire" className="flex w-[70px] justify-center"><span className="h-px w-[15px] bg-black" /></button>
            <button type="button" aria-label="Restaurer" className="flex w-[69px] justify-center">
              <svg width="16" height="16" viewBox="0 0 16 16" fill="none" stroke="#000" strokeWidth="1.300"><rect x="1" y="4" width="11" height="11" rx="2" /><path d="M4 1.500q1-.5 2-.5h5q4 0 4 4v5q0 1-.7 2" /></svg>
            </button>
            <button type="button" aria-label="Fermer" className="flex w-[73px] justify-center">
              <svg width="16" height="16" viewBox="0 0 16 16" stroke="#000" strokeWidth="1.300"><path d="M.5.5l15 15M15.500.5l-15 15" /></svg>
            </button>
          </div>
        </div>
        <nav className="flex h-[34px] text-[15px] text-[#3b3b3b]">
          <button type="button" className="w-[84px] bg-[#1979ca] text-white">Fichier</button>
          <button type="button" className="h-[35px] w-[89px] border border-b-0 border-[#d9dbdd] bg-[#f5f6f7] pb-[2px]">Accueil</button>
          <div className="flex flex-1 items-center border-b border-[#d9dbdd]">
            <button type="button" className="w-[106px]">Affichage</button>
            <div className="flex-1" />
            <button type="button" aria-label="Réduire le ruban" className="mr-3"><svg width="18" height="10" viewBox="0 0 18 10" fill="none" stroke="#a6a6a6" strokeWidth="1.800"><path d="M1 9l8-8 8 8" /></svg></button>
            <button type="button" aria-label="Aide" className="mr-[5px] flex size-[22px] items-center justify-center rounded-full border border-[#0c5499] bg-[#0a6fd0] text-[16px] leading-none font-semibold text-white">?</button>
          </div>
        </nav>
      </header>
      <Ribbon />
      <Ruler />
      <div className="flex min-h-0 flex-1">
        <div className="flex-1 overflow-hidden bg-linear-to-b from-[#c5cedf] to-[#dce6f2]"><Page /></div>
        <ScrollBar />
      </div>
      <StatusBar />
      <TaskBar />
    </div>
  );
}
